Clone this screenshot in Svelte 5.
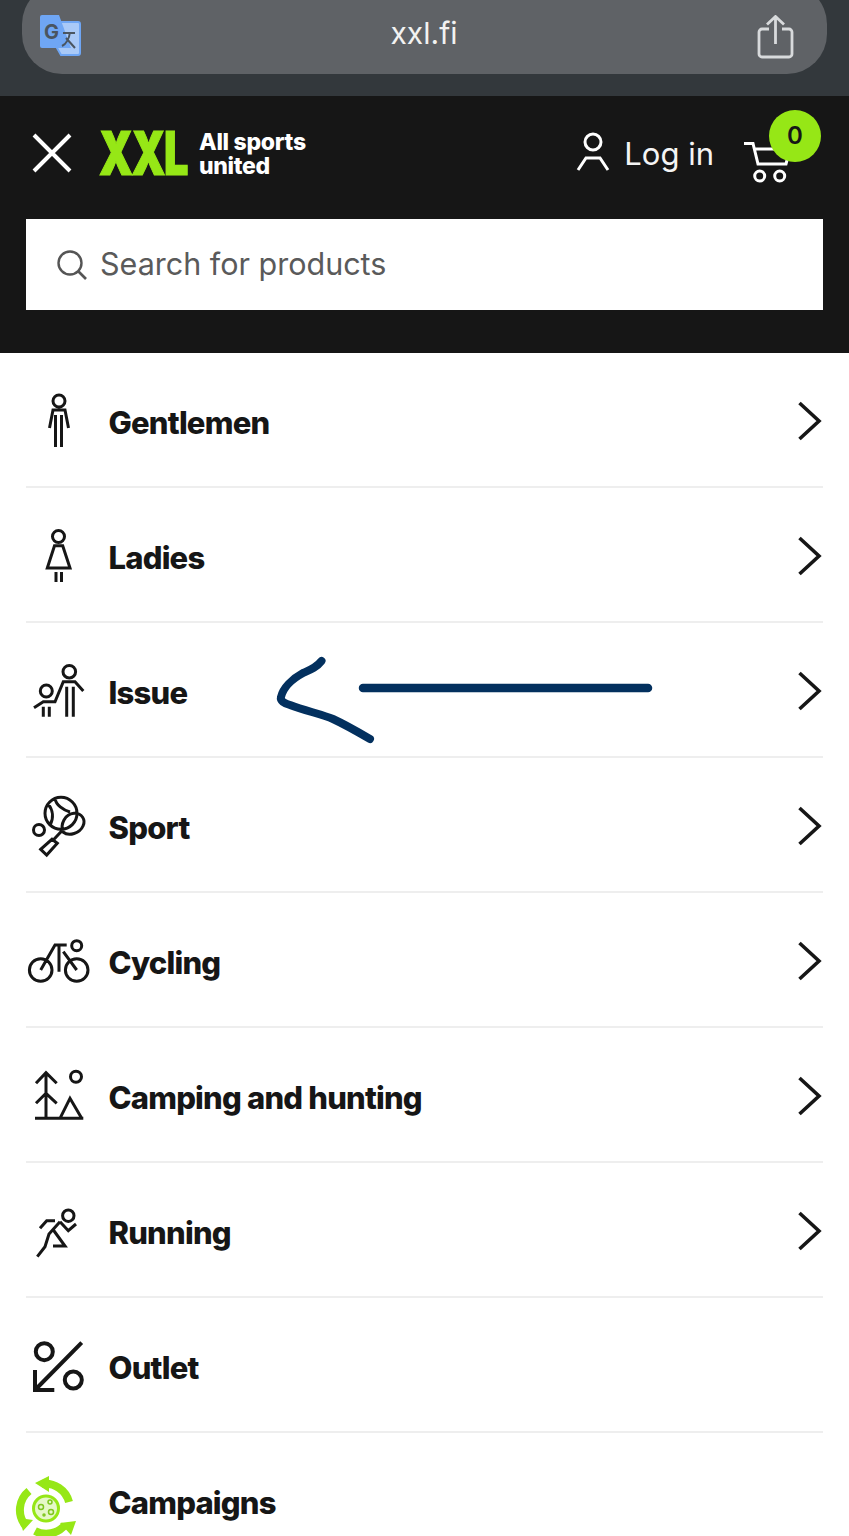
<script>
  // svg circle as a path fragment, so each icon can stay one d string
  const c = (x, y, r) => `M${x - r} ${y}a${r} ${r} 0 1 0 ${2 * r} 0a${r} ${r} 0 1 0 ${-2 * r} 0`;

  const items = [
    { name: 'Gentlemen', more: true, d: c(30, 10, 6) + 'M20.5 37L24 19H36L39.5 37M26.5 24V56M32.5 24V56' },
    { name: 'Ladies', more: true, d: c(29.5, 10.5, 6) + 'M25.5 19.7H33.7L41 42H18.3ZM27 46V56M32.5 46V56' },
    {
      name: 'Issue',
      more: true,
      d: c(40.3, 10.7, 6.3) + c(17.3, 30, 6) + 'M5 46.7L14.3 40.7H26L34.3 20.7H46L54.3 30M37.7 25.7V55.7M44.3 25.7V55.7M14.3 45.7V55.7M20.3 45.7V55.7'
    },
    {
      name: 'Sport',
      more: true,
      d: c(32, 17.3, 16) + c(10, 34, 5.5) +
        'M19 8C24 14 25 22 21 29M26 2.500C27 9 34 14 41 16M34 36C31 28 36 18 45 17.300C53 17 57 24 54 30C51 37 40 41 34 36ZM34.300 33.300L24.300 44M11.700 53.300L17.700 59L28.300 47.300L23 43.300Z'
    },
    {
      name: 'Cycling',
      more: true,
      d: c(11.7, 39, 11.3) + c(47.7, 39, 11.3) + c(47.7, 14.7, 5) + 'M11.7 39L26 14H37.7M30 14V40.7M34.3 20.7L47.7 39'
    },
    {
      name: 'Camping and hunting',
      more: true,
      d: c(47, 10.7, 5.5) + 'M17 6.7V52.3M7 17.3L17 6.7L27.7 17.3M7 37.3L17 27.3L27.7 37.3M6 52.3H54.3M31 52.3L41 32.3L52.7 52.3'
    },
    {
      name: 'Running',
      more: true,
      d: c(39.3, 14.7, 5.7) + 'M11 27.3L17.7 19.7H26M31 20.7L20 33L16 45.7L8.3 55.7M24 28.500L36 45H24M31 20.7L39.3 29.7L47 23'
    },
    { name: 'Outlet', more: false, wide: true, d: c(15.3, 15.7, 8.5) + c(44.3, 44, 8.5) + 'M52.7 6.7L6 54M6 34V54H25.3' },
    { name: 'Campaigns', more: false, green: true }
  ];
</script>

<div class="page">
  <div class="browser">
    <div class="pill">
      <svg class="translate" width="44" height="44" viewBox="0 0 44 44" aria-hidden="true">
        <path d="M18 8H39a2 2 0 0 1 2 2V39a2 2 0 0 1-2 2H22L18 34Z" fill="#a9c9f7" stroke="#6fa6f4" stroke-width="2" />
        <path d="M3 1H20L32 34H3a2 2 0 0 1-2-2V3a2 2 0 0 1 2-2Z" fill="#6fa6f4" />
        <text x="5" y="25" class="g">G</text>
        <path d="M24 19H36M31 18C30 26 27 30 23 32M27 24L36 34" fill="none" stroke="#4a5560" stroke-width="2" />
      </svg>
      <span class="url">xxl.fi</span>
      <svg class="share" width="38" height="44" viewBox="0 0 38 44" aria-hidden="true">
        <path d="M12 14H5a3 3 0 0 0-3 3V39a3 3 0 0 0 3 3H32a3 3 0 0 0 3-3V17a3 3 0 0 0-3-3H25M18.500 29V2M10 9.500L18.500 1.500L27 9.500" fill="none" stroke="#d8dadc" stroke-width="2.800" />
      </svg>
    </div>
  </div>

  <header class="head">
    <div class="top">
      <svg class="close" width="40" height="40" viewBox="0 0 40 40" aria-hidden="true">
        <path d="M2 2L38 38M38 2L2 38" stroke="#fff" stroke-width="4" />
      </svg>
      <span class="xxl">XXL</span>
      <span class="tag">All sports<br />united</span>
      <span class="spacer"></span>
      <svg class="user" width="34" height="40" viewBox="0 0 34 40" aria-hidden="true">
        <circle cx="17" cy="10" r="8" fill="none" stroke="#fff" stroke-width="3" />
        <path d="M2 38L10 26H24L32 38" fill="none" stroke="#fff" stroke-width="3" />
      </svg>
      <span class="login">Log in</span>
      <div class="cart">
        <svg width="48" height="44" viewBox="0 0 48 44" aria-hidden="true">
          <path d="M0 1.500H9L14 22H42L46 7H10" fill="none" stroke="#fff" stroke-width="3" />
          <circle cx="15.700" cy="34" r="5" fill="none" stroke="#fff" stroke-width="3" />
          <circle cx="35.700" cy="34" r="5" fill="none" stroke="#fff" stroke-width="3" />
        </svg>
        <span class="badge">0</span>
      </div>
    </div>
    <div class="search">
      <svg width="32" height="32" viewBox="0 0 32 32" aria-hidden="true">
        <circle cx="14" cy="14" r="11.500" fill="none" stroke="#555" stroke-width="2.400" />
        <path d="M22 22L30 30" stroke="#555" stroke-width="2.600" />
      </svg>
      <span>Search for products</span>
    </div>
  </header>

  <main class="menu">
    {#each items as item}
      <a class="row" href="#top">
        <svg class="icon" width="60" height="60" viewBox="0 0 60 60" aria-hidden="true">
          {#if item.green}
            <g transform="translate(1 2)">
              <g fill="none" stroke="#96e716" stroke-width="8">
                <path d="M-5 52A24.500 24.500 0 0 1 -1 18" />
                <path d="M12 11A24.500 24.500 0 0 1 39 29" />
                <path d="M5 58A24.500 24.500 0 0 0 35 52" />
              </g>
              <path d="M5 10L19 3L19 19ZM30 50L46 48L41 62ZM-11 45L3 47L-7 58Z" fill="#96e716" />
              <circle cx="16" cy="35.500" r="12.500" fill="#e6f8c8" stroke="#96e716" stroke-width="3" />
              <g fill="none" stroke="#7fc71f" stroke-width="1.500">
                <circle cx="11" cy="34" r="2.500" />
                <circle cx="20" cy="29" r="2" />
                <circle cx="21" cy="39" r="2.500" />
                <circle cx="14" cy="42" r="1" />
              </g>
            </g>
          {:else}
            <path d={item.d} fill="none" stroke="#161616" stroke-width={item.wide ? 4 : 3} />
          {/if}
        </svg>
        <span class="name">{item.name}</span>
        {#if item.more}
          <svg class="chev" width="26" height="40" viewBox="0 0 26 40" aria-hidden="true">
            <path d="M2.500 2L22 20L2.500 38" fill="none" stroke="#161616" stroke-width="3.600" />
          </svg>
        {/if}
      </a>
    {/each}
  </main>

  <!-- hand drawn marker on top of the screenshot -->
  <svg class="marker" width="849" height="1536" viewBox="0 0 849 1536" aria-hidden="true">
    <path d="M363 688H648" fill="none" stroke="#03305e" stroke-width="8.500" stroke-linecap="round" />
    <path d="M321.500 661C316 668 310 670 303 673C292 679 283 688 281 697C280 701 284 703 290 705C305 711 322 714 333 719C346 725 358 732 370 739" fill="none" stroke="#03305e" stroke-width="8" stroke-linecap="round" stroke-linejoin="round" />
  </svg>
</div>

<style>
  :global(html, body) {
    margin: 0;
    background: #fff;
  }

  .page {
    position: relative;
    height: 1536px;
    overflow: hidden;
    font-family: Inter, "Liberation Sans", sans-serif;
  }

  .browser {
    height: 96px;
    padding: 0 22px;
    box-sizing: border-box;
    overflow: hidden;
    background: #33383c;
  }

  .pill {
    display: grid;
    grid-template-columns: 1fr auto 1fr;
    align-items: center;
    height: 90px;
    margin-top: -16px;
    padding: 16px 32px 0 17px;
    box-sizing: border-box;
    border-radius: 40px;
    background: #5f6266;
  }

  .g {
    font: 700 20px Inter, sans-serif;
    fill: #4a5560;
  }

  .url {
    font-size: 30px;
    color: #f2f2f2;
    margin: -8px 0 0 14px;
  }

  .translate {
    margin-top: -2px;
  }

  .share {
    justify-self: end;
  }

  .head {
    height: 257px;
    padding: 0 26px;
    box-sizing: border-box;
    background: #161616;
  }

  .top {
    display: flex;
    align-items: center;
    height: 123px;
  }

  .close {
    margin: 0 27px 10px 6px;
  }

  .xxl {
    display: inline-block;
    width: 87px;
    margin-bottom: 10px;
    font-size: 60px;
    font-weight: 900;
    line-height: 1;
    letter-spacing: -2px;
    color: #96e716;
    -webkit-text-stroke: 1.2px #96e716;
    transform: scaleX(0.72);
    transform-origin: left center;
  }

  .tag {
    margin: 0 0 8px 13px;
    font-size: 23px;
    font-weight: 800;
    line-height: 24px;
    letter-spacing: -0.3px;
    color: #fff;
  }

  .spacer {
    flex: 1;
  }

  .user {
    margin: 0 14px 12px 0;
  }

  .login {
    font-size: 31px;
    color: #f4f4f4;
    margin: 0 30px 8px 0;
  }

  .cart {
    position: relative;
    width: 52px;
    height: 44px;
    margin: 12px 27px 0 0;
  }

  .badge {
    position: absolute;
    top: -32px;
    right: -25px;
    display: flex;
    align-items: center;
    justify-content: center;
    width: 52px;
    height: 52px;
    border-radius: 50%;
    background: #96e716;
    font-size: 24px;
    font-weight: 600;
    color: #161616;
  }

  .search {
    display: flex;
    align-items: center;
    gap: 12px;
    height: 91px;
    padding-left: 30px;
    box-sizing: border-box;
    background: #fff;
    font-size: 30.5px;
    color: #5a5a5a;
  }

  .search span {
    margin-top: -2px;
  }

  .menu {
    padding: 0 26px;
  }

  .row {
    display: flex;
    align-items: center;
    height: 135px;
    padding-top: 3px;
    box-sizing: border-box;
    border-bottom: 2px solid #eeeeee;
    color: #161616;
    text-decoration: none;
  }

  .icon {
    flex: none;
    margin: 0 19.5px 0 3px;
    overflow: visible;
  }

  .name {
    flex: 1;
    margin-top: 2px;
    font-size: 31px;
    font-weight: 800;
    letter-spacing: -0.8px;
  }

  .marker {
    position: absolute;
    inset: 0;
    pointer-events: none;
  }
</style>
